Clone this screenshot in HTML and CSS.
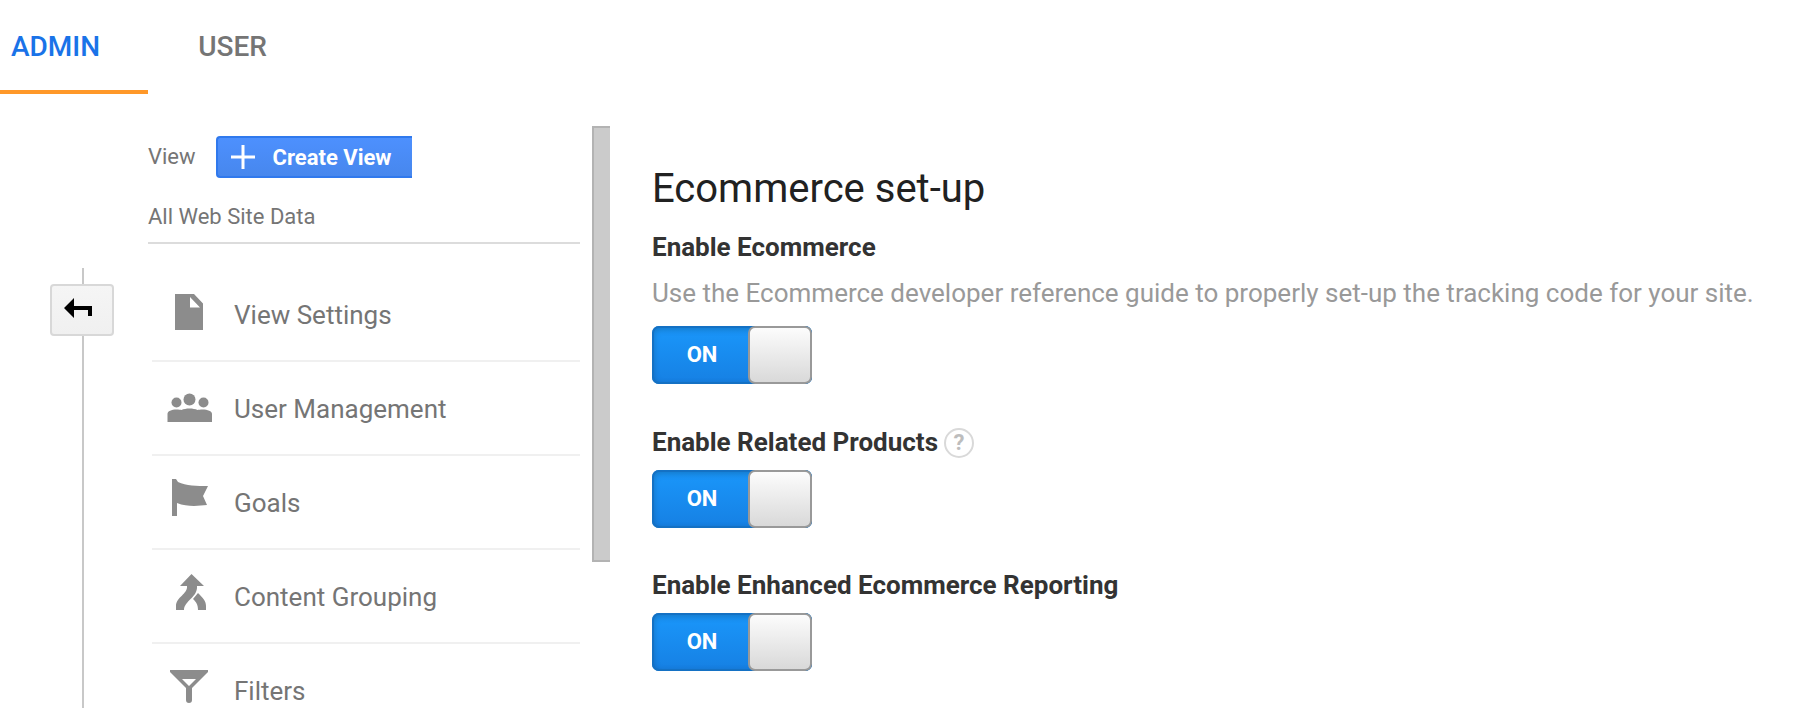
FILE: index.html
```html
<!DOCTYPE html>
<html lang="en">

<head>
    <meta charset="utf-8">
    <title>Ecommerce set-up</title>
    <link rel="stylesheet" href="styles.css">
</head>

<body>
    <nav class="tabs">
        <a class="tab active" href="#admin">ADMIN</a>
        <a class="tab" href="#user">USER</a>
    </nav>

    <div class="layout">
        <div class="rail">
            <button class="back-btn" aria-label="Back">
                <svg width="28" height="20" viewBox="0 0 28 20">
                    <path d="M0 10 10 0v8h18v10h-4v-6H10v8z" />
                </svg>
            </button>
        </div>

        <div class="sidebar">
            <div class="view-header">
                <span>View</span>
                <button class="create-btn">
                    <svg width="24" height="24" viewBox="0 0 24 24">
                        <path d="M12 0v24M0 12h24" />
                    </svg>
                    Create View
                </button>
            </div>
            <div class="view-name">All Web Site Data</div>

            <nav class="menu">
                <a class="menu-item" href="#settings">
                    <svg class="menu-icon" viewBox="0 0 48 48">
                        <path d="M9 8h19l9 9.500V44H9zM24 11v10.500h10z" fill-rule="evenodd" />
                    </svg>
                    View Settings
                </a>
                <a class="menu-item" href="#users">
                    <svg class="menu-icon" viewBox="0 0 48 48">
                        <circle cx="10.500" cy="22.500" r="5" />
                        <circle cx="23.500" cy="19.500" r="6" />
                        <circle cx="37.500" cy="22.500" r="5" />
                        <path d="M1.500 42v-8c0-3 4-4.500 9-4.500 2 0 4 .2 5 .5 2-1 5-1.500 8-1.500s6 .5 8 1.500c1-.3 3-.5 5-.5 5 0 9.500 1.500 9.500 4.500v8z" />
                    </svg>
                    User Management
                </a>
                <a class="menu-item" href="#goals">
                    <svg class="menu-icon" viewBox="0 0 48 48">
                        <path d="M6 5h4l2 3c8 4 19 4 30 4l-5 10 4 9c-9 1-20 2-30-2v13H6z" />
                    </svg>
                    Goals
                </a>
                <a class="menu-item" href="#grouping">
                    <svg class="menu-icon" viewBox="0 0 48 48">
                        <path d="M25.500 6 38 18h-7c1 11-13 15-13 24h-8v-4c0-9 12-12 11-20h-7z" />
                        <path d="m32 25-5 6c3 3 5 5 5 11h8v-4c0-5-3-8-8-13z" />
                    </svg>
                    Content Grouping
                </a>
                <a class="menu-item" href="#filters">
                    <svg class="menu-icon" viewBox="0 0 48 48">
                        <path d="M4 8h38v2L26 26v12q0 3-3 3t-3-3V26L4 10zM16 17l7 7 7-7z" fill-rule="evenodd" />
                    </svg>
                    Filters
                </a>
            </nav>
        </div>

        <div class="divider"></div>

        <main class="content">
            <h1>Ecommerce set-up</h1>

            <section class="setting">
                <h2 id="ecommerceLabel">Enable Ecommerce</h2>
                <p>Use the Ecommerce developer reference guide to properly set-up the tracking code for your site.</p>
                <label class="toggle">
                    <input type="checkbox" aria-labelledby="ecommerceLabel" checked>
                    <span class="toggle-text">ON</span>
                    <span class="toggle-thumb"></span>
                </label>
            </section>

            <section class="setting">
                <div class="setting-title">
                    <h2 id="relatedLabel">Enable Related Products</h2>
                    <button class="help-btn" aria-label="Help">?</button>
                </div>
                <label class="toggle">
                    <input type="checkbox" aria-labelledby="relatedLabel" checked>
                    <span class="toggle-text">ON</span>
                    <span class="toggle-thumb"></span>
                </label>
            </section>

            <section class="setting">
                <h2 id="enhancedLabel">Enable Enhanced Ecommerce Reporting</h2>
                <label class="toggle">
                    <input type="checkbox" aria-labelledby="enhancedLabel" checked>
                    <span class="toggle-text">ON</span>
                    <span class="toggle-thumb"></span>
                </label>
            </section>
        </main>
    </div>
</body>

</html>
```

FILE: styles.css
```css
* {
    box-sizing: border-box;
}

body {
    margin: 0;
    height: 100vh;
    display: flex;
    flex-direction: column;
    overflow: hidden;
    background: #fff;
    color: #757575;
    font-family: Roboto, Arial, sans-serif;
    font-size: 26px;
    line-height: 32px;
}

button {
    font-family: inherit;
    cursor: pointer;
}

.tabs {
    display: flex;
    flex: none;
}

.tab {
    min-width: 148px;
    padding: 31px 48px 27px 50px;
    border-bottom: 4px solid transparent;
    color: #757575;
    font-size: 28px;
    font-weight: 500;
    text-decoration: none;
}

.tab.active {
    padding-left: 11px;
    border-color: #ff9829;
    color: #1a73e8;
}

.layout {
    display: flex;
    flex: 1;
    min-height: 0;
}

.rail {
    flex: none;
    width: 148px;
    margin-top: 174px;
    padding: 16px 34px 0 50px;
    background: linear-gradient(#c8c8c8, #c8c8c8) 82px 0 / 2px 100% no-repeat;
}

.back-btn {
    display: flex;
    align-items: center;
    width: 64px;
    height: 52px;
    padding: 0 12px 4px;
    border: 2px solid #d8d8d8;
    border-radius: 4px;
    background: linear-gradient(#f5f5f5, #f0f0f0);
}

.sidebar {
    flex: none;
    width: 432px;
    padding-top: 42px;
}

.view-header {
    display: flex;
    align-items: center;
    gap: 20px;
    font-size: 22px;
}

.create-btn {
    display: flex;
    align-items: center;
    gap: 18px;
    height: 42px;
    padding: 0 20px 0 13px;
    border: 2px solid #3079ed;
    border-right: none;
    border-radius: 4px 0 0 4px;
    background: linear-gradient(#4d90fe, #4787ed);
    color: #fff;
    font-size: 22px;
    font-weight: bold;
}

.create-btn svg {
    stroke: #fff;
    stroke-width: 3;
}

.view-name {
    padding: 23px 0 9px;
    border-bottom: 2px solid #dcdcdc;
    font-size: 22px;
}

.menu {
    margin: 24px 0 0 4px;
}

.menu-item {
    display: flex;
    align-items: center;
    gap: 20px;
    height: 94px;
    padding: 2px 0 0 14px;
    border-bottom: 2px solid #f0f0f0;
    color: #757575;
    text-decoration: none;
}

.menu-icon {
    width: 48px;
    height: 48px;
    margin-bottom: 10px;
    fill: #8c8c8c;
}

.divider {
    flex: none;
    width: 18px;
    height: 436px;
    margin: 32px 0 0 12px;
    border: 2px solid #b3b3b3;
    border-right: none;
    background: #cbcbcb;
}

.content {
    flex: 1;
    min-width: 0;
    padding: 71px 20px 0 42px;
}

h1 {
    margin: 0 0 18px;
    color: #212121;
    font-size: 40px;
    font-weight: normal;
    line-height: 48px;
}

h2 {
    margin: 0;
    color: #333;
    font-size: 26px;
    font-weight: bold;
}

.setting {
    margin-bottom: 41px;
}

.setting p {
    margin: 14px 0 17px;
    color: #999;
}

.setting-title {
    display: flex;
    align-items: flex-end;
    gap: 6px;
    padding-top: 1px;
}

.help-btn {
    width: 30px;
    height: 30px;
    padding: 0;
    border: 2px solid #d9d9d9;
    border-radius: 50%;
    background: #fff;
    color: #bdbdbd;
    font-size: 22px;
    font-weight: bold;
    line-height: 26px;
}

.toggle {
    position: relative;
    display: flex;
    width: 160px;
    height: 58px;
    margin-top: 12px;
    border-radius: 7px;
    background: linear-gradient(#1a97fb, #1680e3);
    box-shadow: inset 0 0 0 2px #1471c4, inset 0 2px 6px 2px rgba(0, 0, 0, 0.2);
    cursor: pointer;
}

.toggle input {
    position: absolute;
    inset: 0;
    width: 100%;
    height: 100%;
    margin: 0;
    opacity: 0;
    cursor: pointer;
}

.toggle-text {
    flex: 1;
    padding-left: 4px;
    color: #fff;
    font-size: 22px;
    font-weight: bold;
    line-height: 58px;
    text-align: center;
}

.toggle-thumb {
    width: 64px;
    border: 2px solid #999;
    border-radius: 7px;
    background: linear-gradient(#fcfcfc, #d9d9d9);
}
```
